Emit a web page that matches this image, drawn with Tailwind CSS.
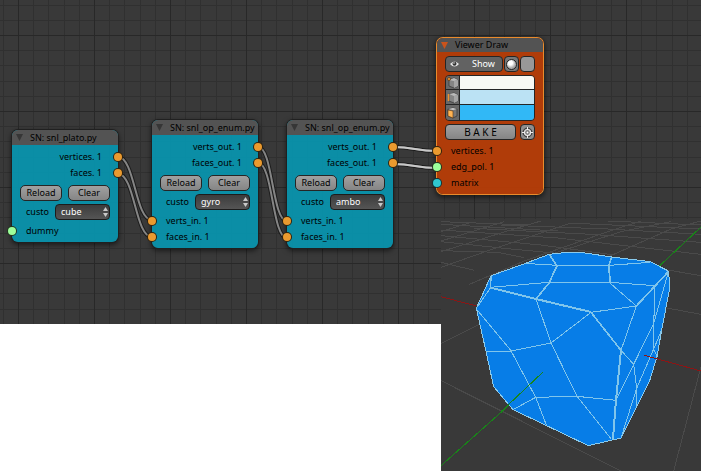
<!DOCTYPE html>
<html lang="en">
<head>
<meta charset="utf-8">
<title>Node editor</title>
<script src="https://cdn.jsdelivr.net/npm/@tailwindcss/browser@4"></script>
</head>
<body class="bg-white">
<main class="grid min-h-screen grid-cols-[441px_1fr] grid-rows-[219px_105px_1fr] overflow-hidden font-['Noto_Sans','DejaVu_Sans',sans-serif] text-[9px] leading-4 whitespace-nowrap text-black">

  <section aria-label="Node editor" class="relative col-span-2 col-start-1 row-span-2 row-start-1 bg-[#393939]">
    <svg class="absolute inset-0 h-full w-full" aria-hidden="true">
      <defs>
        <pattern id="grid" x="18" y="35" width="76" height="76" patternUnits="userSpaceOnUse">
          <path d="M15 0h1v76h-1zM30 0h1v76h-1zM46 0h1v76h-1zM61 0h1v76h-1zM0 15h76v1H0zM0 30h76v1H0zM0 46h76v1H0zM0 61h76v1H0z" fill="#303030"/>
          <path d="M0 0h1v76H0zM0 0h76v1H0z" fill="#282828"/>
        </pattern>
        <g id="links" fill="none">
          <path d="M118 157C135 157 135 220 152 220M118 174C135 174 135 237 152 237M258 147C273 147 272 221 287 221M258 163C273 163 272 238 287 238M393 147C415 147 415 151 437 151M393 164C415 164 415 168 437 168"/>
        </g>
      </defs>
      <rect width="100%" height="100%" fill="url(#grid)"/>
      <use href="#links" stroke="#1c1c1c" stroke-width="4"/>
      <use href="#links" stroke="#858585" stroke-width="2"/>
      <path d="M393 147C415 147 415 151 437 151M393 164C415 164 415 168 437 168" fill="none" stroke="#c8c8c8" stroke-width="2"/>
    </svg>

    <!-- Plato node -->
    <article class="absolute top-[130px] left-3 w-[106px] rounded-md bg-[#0892ac]/95 pb-[3px] shadow-[0_0_0_1px_#202020,0_2px_5px_1px_#0008]">
      <header class="flex h-[15px] items-center gap-[7px] rounded-t-md bg-[#535353] pl-1">
        <svg class="h-[7px] w-[7px]" viewBox="0 0 7 7" aria-hidden="true"><path d="M0 0h7L3.500 7z" fill="#363636"/></svg>
        <h2>SN: snl_plato.py</h2>
      </header>
      <div class="relative pt-1 pr-4 text-right">vertices. 1<i class="absolute top-2 -right-1 size-2 rounded-full bg-[#ea9a2f] ring-1 ring-[#30230f]"></i></div>
      <div class="relative pr-4 text-right">faces. 1<i class="absolute top-1 -right-1 size-2 rounded-full bg-[#ea9a2f] ring-1 ring-[#30230f]"></i></div>
      <div class="mt-1 flex gap-[6px] px-2">
        <button class="h-4 flex-1 rounded-[5px] border border-[#252525] bg-linear-to-b from-[#a1a1a1] to-[#858585] leading-[14px]">Reload</button>
        <button class="h-4 flex-1 rounded-[5px] border border-[#252525] bg-linear-to-b from-[#a1a1a1] to-[#858585] leading-[14px]">Clear</button>
      </div>
      <label class="relative mt-[3px] flex items-center pr-2 pl-[14px]"><span class="flex-1">custo</span>
        <select class="h-4 w-[55px] appearance-none rounded-[4px] border border-[#1c1c1c] bg-linear-to-b from-[#3c3c3c] to-[#555555] pl-[5px] leading-[14px] text-white"><option>cube</option></select>
        <svg class="pointer-events-none absolute top-[3px] right-[10px] h-[10px] w-[5px]" viewBox="0 0 5 10" aria-hidden="true"><path d="M0 4h5L2.500 0zM0 6h5L2.500 10z" fill="#c9c9c9"/></svg>
      </label>
      <div class="relative mt-[3px] pl-[14px]">dummy<i class="absolute top-1 -left-1 size-2 rounded-full bg-[#9dff9b] ring-1 ring-[#22351f]"></i></div>
    </article>

    <!-- Gyro node -->
    <article class="absolute top-[120px] left-[152px] w-[106px] rounded-md bg-[#0892ac]/95 pb-[3px] shadow-[0_0_0_1px_#202020,0_2px_5px_1px_#0008]">
      <header class="flex h-[15px] items-center gap-[7px] rounded-t-md bg-[#535353] pl-1">
        <svg class="h-[7px] w-[7px]" viewBox="0 0 7 7" aria-hidden="true"><path d="M0 0h7L3.500 7z" fill="#363636"/></svg>
        <h2>SN: snl_op_enum.py</h2>
      </header>
      <div class="relative pt-1 pr-4 text-right">verts_out. 1<i class="absolute top-2 -right-1 size-2 rounded-full bg-[#ea9a2f] ring-1 ring-[#30230f]"></i></div>
      <div class="relative pr-4 text-right">faces_out. 1<i class="absolute top-1 -right-1 size-2 rounded-full bg-[#ea9a2f] ring-1 ring-[#30230f]"></i></div>
      <div class="mt-1 flex gap-[6px] px-2">
        <button class="h-4 flex-1 rounded-[5px] border border-[#252525] bg-linear-to-b from-[#a1a1a1] to-[#858585] leading-[14px]">Reload</button>
        <button class="h-4 flex-1 rounded-[5px] border border-[#252525] bg-linear-to-b from-[#a1a1a1] to-[#858585] leading-[14px]">Clear</button>
      </div>
      <label class="relative mt-[3px] flex items-center pr-2 pl-[14px]"><span class="flex-1">custo</span>
        <select class="h-4 w-[55px] appearance-none rounded-[4px] border border-[#1c1c1c] bg-linear-to-b from-[#3c3c3c] to-[#555555] pl-[5px] leading-[14px] text-white"><option>gyro</option></select>
        <svg class="pointer-events-none absolute top-[3px] right-[10px] h-[10px] w-[5px]" viewBox="0 0 5 10" aria-hidden="true"><path d="M0 4h5L2.500 0zM0 6h5L2.500 10z" fill="#c9c9c9"/></svg>
      </label>
      <div class="relative mt-[3px] pl-[14px]">verts_in. 1<i class="absolute top-1 -left-1 size-2 rounded-full bg-[#ea9a2f] ring-1 ring-[#30230f]"></i></div>
      <div class="relative pl-[14px]">faces_in. 1<i class="absolute top-1 -left-1 size-2 rounded-full bg-[#ea9a2f] ring-1 ring-[#30230f]"></i></div>
    </article>

    <!-- Ambo node -->
    <article class="absolute top-[120px] left-[287px] w-[106px] rounded-md bg-[#0892ac]/95 pb-[3px] shadow-[0_0_0_1px_#202020,0_2px_5px_1px_#0008]">
      <header class="flex h-[15px] items-center gap-[7px] rounded-t-md bg-[#535353] pl-1">
        <svg class="h-[7px] w-[7px]" viewBox="0 0 7 7" aria-hidden="true"><path d="M0 0h7L3.500 7z" fill="#363636"/></svg>
        <h2>SN: snl_op_enum.py</h2>
      </header>
      <div class="relative pt-1 pr-4 text-right">verts_out. 1<i class="absolute top-2 -right-1 size-2 rounded-full bg-[#ea9a2f] ring-1 ring-[#30230f]"></i></div>
      <div class="relative pr-4 text-right">faces_out. 1<i class="absolute top-1 -right-1 size-2 rounded-full bg-[#ea9a2f] ring-1 ring-[#30230f]"></i></div>
      <div class="mt-1 flex gap-[6px] px-2">
        <button class="h-4 flex-1 rounded-[5px] border border-[#252525] bg-linear-to-b from-[#a1a1a1] to-[#858585] leading-[14px]">Reload</button>
        <button class="h-4 flex-1 rounded-[5px] border border-[#252525] bg-linear-to-b from-[#a1a1a1] to-[#858585] leading-[14px]">Clear</button>
      </div>
      <label class="relative mt-[3px] flex items-center pr-2 pl-[14px]"><span class="flex-1">custo</span>
        <select class="h-4 w-[55px] appearance-none rounded-[4px] border border-[#1c1c1c] bg-linear-to-b from-[#3c3c3c] to-[#555555] pl-[5px] leading-[14px] text-white"><option>ambo</option></select>
        <svg class="pointer-events-none absolute top-[3px] right-[10px] h-[10px] w-[5px]" viewBox="0 0 5 10" aria-hidden="true"><path d="M0 4h5L2.500 0zM0 6h5L2.500 10z" fill="#c9c9c9"/></svg>
      </label>
      <div class="relative mt-[3px] pl-[14px]">verts_in. 1<i class="absolute top-1 -left-1 size-2 rounded-full bg-[#ea9a2f] ring-1 ring-[#30230f]"></i></div>
      <div class="relative pl-[14px]">faces_in. 1<i class="absolute top-1 -left-1 size-2 rounded-full bg-[#ea9a2f] ring-1 ring-[#30230f]"></i></div>
    </article>

    <!-- Viewer node -->
    <article class="absolute top-[38px] left-[437px] w-[106px] rounded-md bg-[#b23c08]/98 pb-[3px] shadow-[0_0_0_1px_#e98b2c,0_2px_5px_2px_#0008]">
      <header class="flex h-[14px] items-center gap-[7px] rounded-t-md bg-[#535353] pl-1">
        <svg class="h-[7px] w-[7px]" viewBox="0 0 7 7" aria-hidden="true"><path d="M0 0h7L3.500 7z" fill="#c9531b"/></svg>
        <h2>Viewer Draw</h2>
      </header>
      <div class="mt-1 flex gap-px px-2">
        <button class="flex h-4 flex-1 items-center gap-[13px] rounded-[4px] border border-[#252525] bg-[#626262] pl-1 leading-[14px] text-white">
          <svg class="h-[8px] w-[9px]" viewBox="0 0 9 8" aria-hidden="true"><path d="M0 4Q4.500-1 9 4Q4.500 9 0 4z" fill="#e8e8e8"/><circle cx="4.500" cy="3.700" r="2" fill="#333"/><circle cx="4" cy="3" r=".7" fill="#fff"/></svg>Show</button>
        <button aria-label="Shading" class="flex h-4 w-[15px] items-center justify-center rounded-[4px] border border-[#252525] bg-[#777777]">
          <svg class="size-[11px]" viewBox="0 0 11 11" aria-hidden="true"><defs><radialGradient id="ball" cx=".4" cy=".35"><stop offset=".4" stop-color="#fff"/><stop offset="1" stop-color="#aaa"/></radialGradient></defs><circle cx="5.500" cy="5.500" r="5" fill="url(#ball)" stroke="#222"/></svg>
        </button>
        <button aria-label="Transparency" class="h-4 w-[15px] rounded-[4px] border border-[#252525] bg-[#989898]"></button>
      </div>
      <div class="mx-2 mt-[3px] divide-y divide-[#252525] overflow-hidden rounded-[4px] border border-[#252525]">
        <div class="flex h-[14px]"><button aria-label="Show vertices" class="w-[14px] border-r border-[#252525] bg-[#686868]"><svg class="size-[13px]" viewBox="0 0 13 13" aria-hidden="true"><path d="M3 4l5-2 4 2v6l-4 2-5-2z" fill="#858585" stroke="#333" stroke-width=".7"/><path d="M3 4l5 1 4-1-4-2z" fill="#bbb"/><path d="M8 5v7l4-2V4z" fill="#a5a5a5"/><circle cx="3" cy="3" r="1.500" fill="#f19a39" stroke="#4d2b0c" stroke-width=".6"/></svg></button><button aria-label="Vertex colour" class="flex-1 bg-[#f8f9f4]"></button></div>
        <div class="flex h-[15px]"><button aria-label="Show edges" class="w-[14px] border-r border-[#252525] bg-[#686868]"><svg class="size-[13px]" viewBox="0 0 13 13" aria-hidden="true"><path d="M3 3l5-1 4 2v6l-4 2-5-2z" fill="#858585" stroke="#333" stroke-width=".7"/><path d="M3 3l5 2 4-1-4-2z" fill="#bbb"/><path d="M8 5v7l4-2V4z" fill="#a5a5a5"/><path d="M2.500 3v7" stroke="#e99335" stroke-width="1.500"/></svg></button><button aria-label="Edge colour" class="flex-1 bg-[#bbe2f4]"></button></div>
        <div class="flex h-[15px]"><button aria-label="Show faces" class="w-[14px] border-r border-[#252525] bg-[#686868]"><svg class="size-[13px]" viewBox="0 0 13 13" aria-hidden="true"><path d="M2 3l5-1 4 1v7l-4 2-5-2z" fill="#777" stroke="#333" stroke-width=".7"/><path d="M2 3l5 1 4-1-4-1z" fill="#ccc"/><path d="M2 4l5 1v7l-5-2z" fill="#ffb454" stroke="#5b3510" stroke-width=".6"/></svg></button><button aria-label="Face colour" class="flex-1 bg-[#31b8f6]"></button></div>
      </div>
      <div class="mt-[3px] flex gap-1 px-2">
        <button class="h-4 flex-1 rounded-[4px] border border-[#252525] bg-linear-to-b from-[#a1a1a1] to-[#858585] text-[10px] leading-[14px]">B A K E</button>
        <button aria-label="Settings" class="flex h-4 w-[15px] items-center justify-center rounded-[4px] border border-[#252525] bg-[#8e8e8e]">
          <svg class="size-[11px]" viewBox="0 0 11 11" aria-hidden="true"><circle cx="5.500" cy="5.500" r="4.500" stroke="#333" fill="#777"/><circle cx="5.500" cy="5.500" r="3" fill="none" stroke="#eee" stroke-width="1.200"/><path d="M5.500 0v3M5.500 8v3M0 5.500h3M8 5.500h3" stroke="#eee"/><circle cx="5.500" cy="5.500" r="1" fill="#fff"/></svg>
        </button>
      </div>
      <div class="relative mt-[3px] pl-[14px]">vertices. 1<i class="absolute top-1 -left-1 size-2 rounded-full bg-[#ea9a2f] ring-1 ring-[#30230f]"></i></div>
      <div class="relative pl-[14px]">edg_pol. 1<i class="absolute top-1 -left-1 size-2 rounded-full bg-[#9dff9b] ring-1 ring-[#22351f]"></i></div>
      <div class="relative pl-[14px]">matrix<i class="absolute top-1 -left-1 size-2 rounded-full bg-[#2fc6cf] ring-1 ring-[#123335]"></i></div>
    </article>
  </section>

  <section aria-label="3D viewport" class="relative col-start-2 row-span-2 row-start-2 overflow-hidden bg-[#393939]">
    <svg class="absolute inset-0 h-full w-full" viewBox="0 12 780 756" preserveAspectRatio="xMinYMin slice" fill="none" stroke-width="3" shape-rendering="crispEdges" role="img" aria-label="Blue polyhedron">
      <path stroke="#4a4a4a" d="M0 497L540 768M780 455L698 768M0 385L120 326M0 157L150 104L390 24M85 208L250 138L500 50L600 18M330 118L540 50L690 20M500 126L690 42L780 18M0 110L225 40L300 18M0 78L190 20M0 50L90 22M0 142L100 166M0 107L170 112L250 128M0 80L200 101L350 115M0 62L300 90L520 120M0 45L350 69L780 118M100 40L450 58L780 82M180 30L500 42L780 58M380 24L780 42M500 18L780 30M0 28L350 48M0 20L260 30M680 165L780 182M672 278L780 298"/>
      <path stroke="#8c1515" d="M0 245L106 273"/>
      <path stroke="#188518" d="M0 752L216 560M650 158L780 36"/>
      <path fill="#077de7" stroke="#8acbed" d="M106 280L150 182L248 147L324 118L380 112L420 112L512 126L628 140L682 168L687 215L662 345L648 425L625 500L540 669L442 692L317 632L216 584L158 515L135 409Z"/>
      <g stroke="#80c5eb">
        <path d="M248 145L348 151H505L628 142M148 217L324 202H508L640 212M106 280L148 219M285 252L330 384L211 408L106 282M135 409H211L284 547L317 632M216 584L284 547L408 544L330 384L450 292L586 273L508 205M408 544L510 671M408 544L525 556L578 448L540 406L586 273M682 170L640 212L638 402L648 425M682 172L638 325L578 448L587 520V574M662 345L638 402L587 520L540 669"/>
        <path stroke-width="5" d="M324 118L348 152L324 204L285 252M150 182L148 217M512 126L503 152L508 205M450 292L540 406M586 273L682 170"/>
        <path stroke-width="6" d="M148 218L285 252L450 291M540 406L525 556L516 671"/>
      </g>
      <path stroke="#188518" d="M180 590L305 472"/>
      <path stroke="#8c1515" d="M610 421L780 468"/>
    </svg>
  </section>
</main>
</body>
</html>
